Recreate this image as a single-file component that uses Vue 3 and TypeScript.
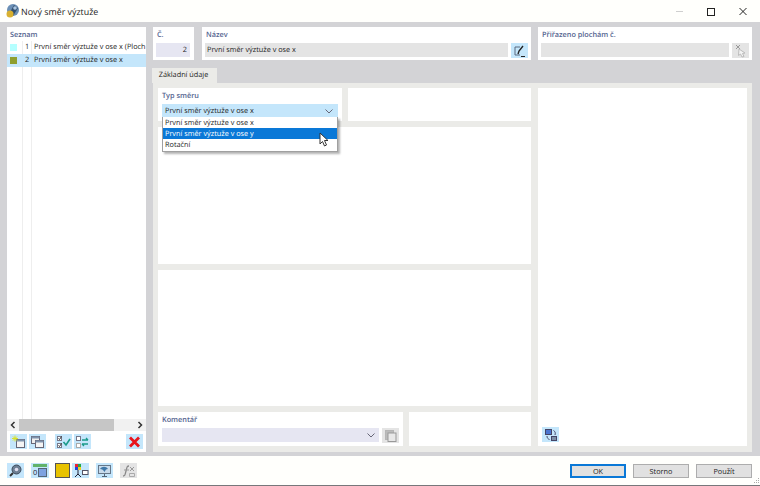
<script setup lang="ts">
const rows = [
  { n: 1, color: '#b5ffff', text: 'První směr výztuže v ose x (Ploch', sel: false },
  { n: 2, color: '#8f9f2f', text: 'První směr výztuže v ose x', sel: true },
]
const options = ['První směr výztuže v ose x', 'První směr výztuže v ose y', 'Rotační']
</script>

<template>
  <div class="win">
    <header class="title">
      <svg class="logo" width="16" height="16" viewBox="0 0 16 16">
        <circle cx="9" cy="7" r="6" fill="#6b8fb5" />
        <path d="M5 11 L10 2 L14 5 L9 13Z" fill="#33506f" />
        <circle cx="6" cy="11" r="3.500" fill="#d8b030" />
        <circle cx="11" cy="5" r="1.800" fill="#a9c6e2" />
      </svg>
      <span class="title-text">Nový směr výztuže</span>
      <div class="win-btns">
        <svg width="31" height="21" viewBox="0 0 31 21"><path d="M0 10.500h7" stroke="#cfcfcf" /></svg>
        <svg width="32" height="21" viewBox="0 0 32 21"><rect x="0.500" y="7.500" width="7" height="7" fill="none" stroke="#222" /></svg>
        <svg width="8" height="21" viewBox="0 0 8 21"><path d="M0.500 7l7 7M7.500 7l-7 7" stroke="#222" fill="none" /></svg>
      </div>
    </header>

    <main class="body">
      <aside class="list card">
        <div class="label list-label">Seznam</div>
        <div class="rows">
          <div v-for="r in rows" :key="r.n" class="row" :class="{ sel: r.sel }">
            <span class="swatch-cell"><i class="swatch" :style="{ background: r.color }"></i></span>
            <span class="num">{{ r.n }}</span>
            <span class="row-text">{{ r.text }}</span>
          </div>
          <div class="row-fill">
            <span class="col-a"></span><span class="col-b"></span>
          </div>
        </div>
        <div class="hscroll">
          <svg width="12" height="12" viewBox="0 0 12 12"><path d="M7.500 3L4.500 6l3 3" fill="none" stroke="#333" stroke-width="1.500" /></svg>
          <div class="track"><div class="thumb"></div></div>
          <svg width="12" height="12" viewBox="0 0 12 12"><path d="M4.500 3l3 3-3 3" fill="none" stroke="#333" stroke-width="1.500" /></svg>
        </div>
        <div class="list-tools">
          <button class="ib">
            <svg width="15" height="14" viewBox="0 0 15 14"><rect x="5.500" y="4.500" width="8" height="8" fill="#f4f4f4" stroke="#667" /><rect x="5.500" y="4.500" width="8" height="2" fill="#7f93ad" /><path d="M4 0.500v6M1 3.500h6M2 1.500l4 4M6 1.500l-4 4" stroke="#d9e22a" stroke-width="1" /></svg>
          </button>
          <button class="ib">
            <svg width="15" height="14" viewBox="0 0 15 14"><rect x="1.500" y="1.500" width="8" height="7" fill="#eee" stroke="#667" /><rect x="1.500" y="1.500" width="8" height="2" fill="#7f93ad" /><rect x="5.500" y="5.500" width="8" height="7" fill="#f4f4f4" stroke="#667" /><rect x="5.500" y="5.500" width="8" height="2" fill="#7f93ad" /></svg>
          </button>
          <span class="gap-a"></span>
          <button class="ib">
            <svg width="15" height="14" viewBox="0 0 15 14"><rect x="1.500" y="1.500" width="4" height="4" fill="#fff" stroke="#778" /><rect x="1.500" y="8.500" width="4" height="4" fill="#fff" stroke="#778" /><path d="M2.500 3.500l1 1 2-3M2.500 10.500l1 1 2-3" stroke="#333" fill="none" /><path d="M7.500 7l2.500 3 4-6" stroke="#1a9a8a" stroke-width="1.600" fill="none" /></svg>
          </button>
          <button class="ib">
            <svg width="15" height="14" viewBox="0 0 15 14"><rect x="1.500" y="1.500" width="4" height="4" fill="#fff" stroke="#778" /><rect x="1.500" y="8.500" width="4" height="4" fill="#fff" stroke="#aaa" /><path d="M7 5h6M13 5l-2-2M13 9H7M7 9l2 2" stroke="#1a9a8a" stroke-width="1.300" fill="none" /></svg>
          </button>
          <span class="spacer"></span>
          <button class="ib">
            <svg width="15" height="14" viewBox="0 0 15 14"><path d="M3 2.500l9 9M12 2.500l-9 9" stroke="#e8141c" stroke-width="2.800" /></svg>
          </button>
        </div>
      </aside>

      <section class="main">
        <div class="top">
          <div class="card no">
            <div class="label">Č.</div>
            <div class="field lav num-field">2</div>
          </div>
          <div class="card name">
            <div class="label">Název</div>
            <div class="line">
              <div class="field gray grow">První směr výztuže v ose x</div>
              <button class="ib">
                <svg width="15" height="14" viewBox="0 0 15 14"><path d="M8 3H3v8h5" fill="none" stroke="#5a6a80" /><path d="M6 10l1-3 4-5" stroke="#222" stroke-width="1.400" fill="none" /><path d="M9 12.500h4" stroke="#222" /></svg>
              </button>
            </div>
          </div>
          <div class="card assign">
            <div class="label">Přiřazeno plochám č.</div>
            <div class="line">
              <div class="field gray grow"></div>
              <button class="ib off">
                <svg width="15" height="14" viewBox="0 0 15 14"><path d="M3 1l4 4M7 1L3 5" stroke="#999" /><path d="M6 5l6 4-2.500 0.500 1.500 3-2 0.500-1.500-3-2 1.500z" fill="#f4f4f4" stroke="#bbb" /></svg>
              </button>
            </div>
          </div>
        </div>

        <div class="tabs"><div class="tab">Základní údaje</div></div>

        <div class="tab-body">
          <div class="left-col">
            <div class="two">
              <div class="card type">
                <div class="label">Typ směru</div>
                <div class="select">
                  <span>První směr výztuže v ose x</span>
                  <svg width="8" height="5" viewBox="0 0 8 5"><path d="M0.500 0.500L4 4l3.500-3.500" fill="none" stroke="#667" /></svg>
                </div>
                <ul class="menu">
                  <li v-for="(o, i) in options" :key="o" :class="{ hot: i === 1 }">{{ o }}</li>
                </ul>
                <svg class="cursor" width="11" height="15" viewBox="0 0 11 15"><path d="M1 1v11l2.500-2.500 2 4.500 2-1-2-4.500h3.500z" fill="#fff" stroke="#333" /></svg>
              </div>
              <div class="card"></div>
            </div>
            <div class="card fill"></div>
            <div class="card fill"></div>
            <div class="bottom">
              <div class="card comment">
                <div class="label">Komentář</div>
                <div class="line">
                  <div class="field lav grow combo">
                    <svg width="8" height="5" viewBox="0 0 8 5"><path d="M0.500 0.500L4 4l3.500-3.500" fill="none" stroke="#667" /></svg>
                  </div>
                  <button class="ib off">
                    <svg width="15" height="14" viewBox="0 0 15 14"><rect x="2.500" y="1.500" width="8" height="9" fill="#bbb" stroke="#b5b5b5" /><rect x="5" y="4" width="8" height="8.500" fill="#e8e8e8" stroke="#999" /></svg>
                  </button>
                </div>
              </div>
              <div class="card"></div>
            </div>
          </div>
          <div class="card right">
            <button class="ib">
              <svg width="15" height="14" viewBox="0 0 15 14"><rect x="2.500" y="1.500" width="6" height="5" fill="#4a74d0" stroke="#446" /><rect x="8.500" y="8.500" width="5" height="4" fill="#7d8fa6" stroke="#446" /><path d="M10.500 2.500c2 1 2 3 1.500 4.500M4 8c0 2 1 3 2.500 3.500" fill="none" stroke="#446" /></svg>
            </button>
          </div>
        </div>
      </section>
    </main>

    <footer class="foot">
      <div class="foot-icons">
        <button class="ib">
          <svg width="15" height="15" viewBox="0 0 15 15"><circle cx="8.500" cy="6.500" r="4.500" fill="#6d7f93" stroke="#3c4a5a" /><path d="M5 10l-3 3" stroke="#333" stroke-width="2" /><circle cx="8.500" cy="6.500" r="1.800" fill="#dde" /></svg>
        </button>
        <button class="ib second">
          <svg width="16" height="15" viewBox="0 0 16 15"><rect x="1" y="1" width="14" height="3" fill="#62b36a" /><text x="1" y="12" font-size="7.500" font-family="Open Sans" fill="#223">0</text><rect x="6.500" y="5.500" width="8" height="8" fill="#7ea2e0" stroke="#567" /></svg>
        </button>
        <div class="yellow"></div>
        <button class="ib fourth">
          <svg width="16" height="15" viewBox="0 0 16 15"><rect x="2" y="1" width="3" height="3" fill="#e23" /><rect x="5" y="1" width="3" height="3" fill="#2a4" /><rect x="2" y="4" width="3" height="3" fill="#24d" /><rect x="5" y="4" width="3" height="3" fill="#ec2" /><path d="M5 7v5M2 14l3-3 3 3" stroke="#223" fill="none" /><rect x="9.500" y="7.500" width="5.500" height="4" fill="#fff" stroke="#556" /></svg>
        </button>
        <button class="ib">
          <svg width="15" height="15" viewBox="0 0 15 15"><rect x="1.500" y="2.500" width="12" height="8" fill="#c9dcec" stroke="#678" /><path d="M3 6c2-3 6-3 8 0-2 0-2.500 1-3.500 3C6.500 7 5 6 3 6z" fill="#3f78a8" /><path d="M7.500 11v2M5 13.500h5" stroke="#567" /></svg>
        </button>
        <button class="ib off">
          <svg width="15" height="15" viewBox="0 0 15 15"><path d="M2 13c2 0 2-1 3-5s1-5 3-5" fill="none" stroke="#888" stroke-width="1.300" /><path d="M3 7h5M9 4l4 4M13 4l-4 4" stroke="#999" /><path d="M8.500 10.500h5v3h-5z" fill="none" stroke="#aaa" /></svg>
        </button>
      </div>
      <div class="foot-btns">
        <button class="btn ok">OK</button>
        <button class="btn">Storno</button>
        <button class="btn">Použít</button>
      </div>
      <svg class="grip" width="8" height="8" viewBox="0 0 8 8"><path d="M6 1h1v1H6zM4 3h1v1H4zM6 3h1v1H6zM2 5h1v1H2zM4 5h1v1H4zM6 5h1v1H6z" fill="#aaa" /></svg>
    </footer>
  </div>
</template>

<style>
html, body { margin: 0; overflow: hidden; }
</style>

<style scoped>
* { box-sizing: border-box; }
.win {
  width: 760px; height: 486px; display: flex; flex-direction: column;
  background: #fffffc;
  font-family: "Open Sans", "Noto Sans", sans-serif; font-size: 7.300px; color: #1e1e24;
  text-rendering: geometricPrecision; font-weight: 500;
  border-bottom: 1px solid #77777a;
}
.title { height: 22px; display: flex; align-items: center; padding-left: 4px; flex: none; }
.logo { margin-right: 1px; }
.title-text { font-size: 8.900px; color: #222; font-weight: 400; }
.win-btns { margin-left: auto; display: flex; padding-right: 13px; }
.body {
  height: 434px; flex: none; background: #d3d3d6; display: flex; gap: 7px; padding: 5px 8px 4px 7px;
}
.card { background: #fff; }
.label { color: #54648f; font-weight: 600; line-height: 10px; }
.list { width: 139px; display: flex; flex-direction: column; }
.list-label { padding: 3px 3px 0; height: 14px; }
.rows { flex: 1; display: flex; flex-direction: column; min-height: 0; }
.row { height: 13px; display: flex; align-items: center; white-space: nowrap; overflow: hidden; }
.row.sel { background: #c4e6fb; }
.swatch-cell { width: 16px; padding-left: 3px; display: flex; flex: none; height: 13px; align-items: center; border-right: 1px solid #eee; }
.swatch { display: block; width: 7px; height: 7px; }
.num { width: 8px; text-align: center; flex: none; height: 13px; line-height: 13px; }
.row-text { padding-left: 2px; border-left: 1px solid #eee; height: 13px; line-height: 13px; }
.sel .row-text, .sel .swatch-cell { border-color: transparent; }
.row-fill { flex: 1; display: flex; }
.col-a { width: 16px; border-right: 1px solid #eee; }
.col-b { width: 9px; border-right: 1px solid #eee; }
.hscroll { height: 12px; display: flex; background: #f1f1f1; flex: none; }
.track { flex: 1; display: flex; }
.thumb { width: 95px; background: #c6c6c6; }
.list-tools { display: flex; gap: 2px; padding: 3px 3px 3px 3px; flex: none; }
.gap-a { width: 5px; }
.spacer { flex: 1; }
.ib {
  width: 17px; height: 15px; background: #c4e6fb; border: 0; padding: 0; flex: none;
  display: flex; align-items: center; justify-content: center;
}
.ib.off { background: #e4e4e4; }
.main { flex: 1; display: flex; flex-direction: column; min-width: 0; }
.top { display: flex; gap: 7px; height: 33px; flex: none; }
.top .card { padding: 3px 3px 0; }
.no { width: 41px; margin-right: 1px; }
.name { width: 329px; }
.assign { width: 214px; }
.top .label { margin-bottom: 3px; margin-left: 1px; }
.field { height: 14px; line-height: 14px; padding: 0 2px; }
.lav { background: #e6e6f2; }
.gray { background: #e4e4e4; }
.num-field { text-align: right; width: 34px; padding-right: 3px; }
.line { display: flex; gap: 3px; }
.grow { flex: 1; }
.tabs { height: 23px; flex: none; display: flex; align-items: flex-end; }
.tab {
  width: 65px; height: 15px; background: #ebebe8; text-align: center; line-height: 15px;
  margin-left: -1px; padding-right: 2px;
}
.tab-body { flex: 1; background: #ebebe8; display: flex; gap: 7px; padding: 5px 5px 6px 5px; min-height: 0; }
.left-col { width: 373px; display: flex; flex-direction: column; gap: 6px; }
.two { display: grid; grid-template-columns: 184px 183px; gap: 6px; height: 33px; flex: none; }
.type { position: relative; padding: 3px 4px; }
.type .label { margin-bottom: 3px; }
.select {
  height: 13px; line-height: 14px; background: #c4e6fb; display: flex; align-items: center; justify-content: space-between;
  padding: 1px 5px 0 3px; width: 176px;
}
.menu {
  position: absolute; left: 4px; top: 29px; width: 176px; margin: 0; padding: 0; list-style: none;
  background: #fff; border: 1px solid #a0a0a0; border-top: 0; box-shadow: 2px 2px 2px rgba(0,0,0,.3); z-index: 3;
}
.menu li { height: 11px; line-height: 13px; padding-left: 2px; }
.menu li:last-child { height: 12px; }
.menu li.hot { background: #0a78d7; color: #fff; }
.cursor { position: absolute; left: 161px; top: 44px; z-index: 4; }
.fill { flex: 1; }
.bottom { display: grid; grid-template-columns: 245px 122px; gap: 6px; height: 34px; flex: none; }
.comment { padding: 3px 4px; }
.comment .label { margin-bottom: 3px; }
.combo { display: flex; align-items: center; justify-content: flex-end; padding-right: 4px; }
.right { flex: 1; display: flex; align-items: flex-end; padding: 4px; }
.foot { flex: 1; display: flex; align-items: center; position: relative; padding: 0 0 0 7px; }
.foot-icons { display: flex; gap: 7px; align-items: center; }
.second { width: 18px; margin-right: -1px; }
.fourth { margin-left: -5px; }
.yellow { width: 15px; height: 15px; background: #e8c300; border: 1px solid #555; }
.foot-btns { margin-left: auto; display: flex; gap: 7px; margin-right: 8px; }
.btn {
  width: 56px; height: 14px; background: #e1e1e1; border: 1px solid #adadad; font: inherit; padding: 0; color: #222;
}
.ok { border: 1px solid #0a78d7; outline: 1px solid #0a78d7; outline-offset: -2px; }
.grip { position: absolute; right: 0; bottom: 0; }
</style>
